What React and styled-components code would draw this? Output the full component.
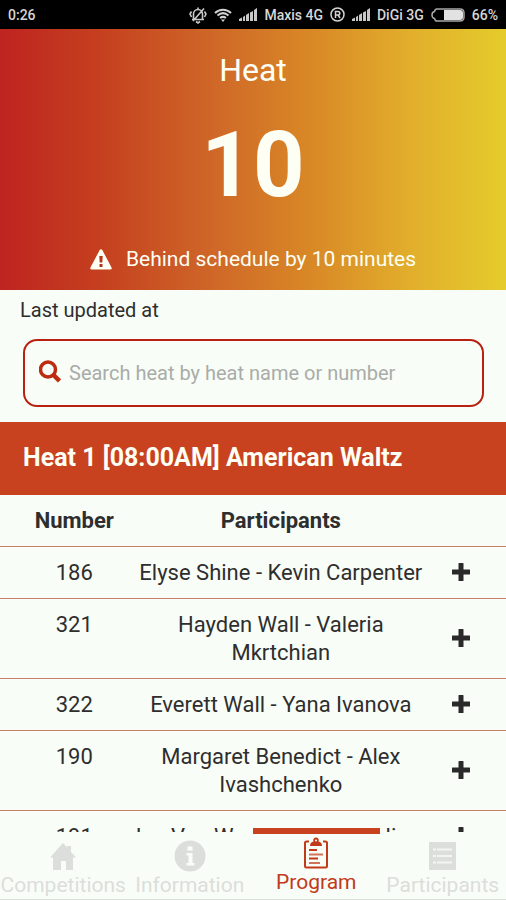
import React from 'react';
import styled, { createGlobalStyle } from 'styled-components';

const GlobalStyle = createGlobalStyle`
  * {
    box-sizing: border-box;
  }
  body {
    margin: 0;
    background: #f9fdf7;
    color: #2e2e2e;
    font-family: Roboto, "Liberation Sans", sans-serif;
    font-size: 22px;
    line-height: 28px;
  }
`

const Screen = styled.div`
  display: flex;
  flex-direction: column;
  height: 100vh;
  overflow: hidden;
`

const StatusBar = styled.div`
  display: flex;
  flex: none;
  align-items: center;
  height: 29px;
  padding: 0 8px;
  background: #000;
  color: #d6d6d6;
  font-size: 14px;
  font-weight: 500;
`

const StatusIcons = styled.div`
  display: flex;
  align-items: center;
  gap: 7px;
  margin-left: auto;
`

const Banner = styled.header`
  display: flex;
  flex: none;
  flex-direction: column;
  align-items: center;
  padding: 21px 16px 17px;
  background: linear-gradient(90deg, #be2420 0%, #c5401f 20%, #cf6728 42%, #d98926 62%, #e2b02c 82%, #e5cc2c 100%);
  color: #fdfff5;
`

const Title = styled.h1`
  margin: 0;
  font-size: 32px;
  line-height: 40px;
  font-weight: 400;
`

const HeatNumber = styled.div`
  margin: 18px 0 21px;
  font-size: 90px;
  line-height: 116px;
  font-weight: 700;
`

const Notice = styled.p`
  display: flex;
  align-items: center;
  gap: 14px;
  margin: 0;
  font-size: 21px;
`

const Updated = styled.p`
  flex: none;
  margin: 0;
  padding: 6px 20px 0;
  font-size: 20px;
`

const SearchBox = styled.label`
  display: flex;
  flex: none;
  align-items: center;
  gap: 8px;
  height: 68px;
  margin: 15px 22px 15px 23px;
  padding: 0 14px;
  border: 2px solid #b8210f;
  border-radius: 14px;
  color: #bd2c10;
`

const SearchInput = styled.input`
  flex: 1;
  min-width: 0;
  padding: 0;
  border: 0;
  outline: 0;
  background: none;
  color: #2e2e2e;
  font: inherit;
  font-size: 20px;
  &::placeholder {
    color: #a9aca8;
    opacity: 1;
  }
`

const HeatTitle = styled.h2`
  flex: none;
  margin: 0;
  padding: 22px 23px 23px;
  background: #c9421f;
  color: #fdfff5;
  font-size: 25px;
  line-height: 28px;
  font-weight: 700;
`

const List = styled.main`
  flex: 1;
  min-height: 0;
  overflow: hidden;
`

const Table = styled.table`
  width: 100%;
  table-layout: fixed;
  border-collapse: separate;
  border-spacing: 0;
  text-align: center;
`

const Cell = styled.td`
  padding: 12px 0 11px;
  border-bottom: 1px solid #c77f69;
`

const NumberCell = styled(Cell)`
  width: 25%;
  padding-left: 22px;
  vertical-align: top;
`

const ActionCell = styled(Cell)`
  width: 14%;
  padding: 0 20px 3px 0;
`

const AddButton = styled.button`
  display: inline-flex;
  padding: 4px;
  border: 0;
  background: none;
  color: #2a2a2a;
  vertical-align: middle;
`

const TabBar = styled.nav`
  display: grid;
  flex: none;
  grid-template-columns: repeat(4, minmax(0, 1fr));
  height: 68px;
  background: #f9fdf7;
  border-bottom: 1px solid #dcdfda;
`

const Tab = styled.a`
  position: relative;
  display: flex;
  flex-direction: column;
  align-items: center;
  justify-content: flex-end;
  padding-bottom: ${props => props.$active ? '3px' : '0'};
  color: ${props => props.$active ? '#c13a1a' : '#dcdedb'};
  font-size: 21px;
  line-height: 27px;
  text-decoration: none;
  white-space: nowrap;
`

const TabIcon = styled.span`
  display: flex;
  align-items: center;
  height: 32px;
`

const Indicator = styled.span`
  position: absolute;
  top: -4px;
  left: 0;
  right: 0;
  height: 6px;
  background: #c9421f;
`

const Signal = () => (
  <svg width="18" height="13" viewBox="0 0 18 13" fill="#c8c8c8">
    <path d="M0 13v-2l3-1.500V13zM4 13V9l2-1.500V13zM7 13V7l3-2v8zM11 13V4.500L14 3v10zM15 13V2l3-2v13z" />
  </svg>
)

const Muted = () => (
  <svg width="18" height="18" viewBox="0 0 18 18" fill="none" stroke="#c8c8c8" strokeWidth="1.6">
    <path d="M4.500 13V8a4.500 4.500 0 0 1 9 0v5M3 13.500h12M7 15.500l2 1.500 2-1.500M9 1.500v2M2.500 5.500L1 8l1.500 3M15.500 5.500L17 8l-1.500 3M4 15L15 2.500" />
  </svg>
)

const Wifi = () => (
  <svg width="18" height="14" viewBox="0 0 18 14" fill="none" stroke="#d2d2d2" strokeWidth="2">
    <path d="M1 5C5.500 0.500 12.500 0.500 17 5M3.500 7.500C7 4.500 11 4.500 14.500 7.500M6 10C8 8.500 10 8.500 12 10" />
    <path d="M7 11.500h4L9 14z" fill="#d2d2d2" stroke="none" />
  </svg>
)

const Registered = () => (
  <svg width="15" height="15" viewBox="0 0 15 15" fill="none" stroke="#d2d2d2" strokeWidth="1.5">
    <circle cx="7.500" cy="7.500" r="6.500" />
    <path d="M5.500 11V4.500h2.500a1.800 1.800 0 0 1 0 3.600H5.500M8 8l2 3" />
  </svg>
)

const Battery = () => (
  <svg width="34" height="14" viewBox="0 0 34 14">
    <path d="M6 1h23q4 0 4 4v4q0 4-4 4H6Q4 13 3.500 10.500Q1 10 1 7t2.500-3.500Q4 1 6 1z" fill="none" stroke="#a8a8a8" strokeWidth="1.500" />
    <path d="M13 2h16q3 0 3 3v4q0 3-3 3H13z" fill="#e2e2e2" />
  </svg>
)

const Warning = () => (
  <svg width="22" height="21" viewBox="0 0 22 21">
    <path d="M9.600 1.200q1.400-2 2.800 0l9 17q1 2.300-1 2.300H1.600q-2 0-1-2.300z" fill="#fdfff5" />
    <path d="M9.300 7h3.400l-.4 6.500H9.700zM9.500 15h3v3h-3z" fill="#b8331d" />
  </svg>
)

const Search = () => (
  <svg width="22" height="26" viewBox="0 0 22 26" fill="none" stroke="currentColor">
    <circle cx="9" cy="9.500" r="7.500" strokeWidth="3.500" />
    <path d="M14.500 15l6 6" strokeWidth="4.500" />
  </svg>
)

const Plus = () => (
  <svg width="18" height="18" viewBox="0 0 18 18" fill="currentColor">
    <path d="M7 0h4q.5 0 .5.500v6h6q.5 0 .5.500v4q0 .5-.5.500h-6v6q0 .5-.5.500H7q-.5 0-.5-.5v-6h-6Q0 11.500 0 11V7q0-.5.500-.5h6v-6Q6.500 0 7 0z" />
  </svg>
)

const House = () => (
  <svg width="26" height="27" viewBox="0 0 26 27" fill="currentColor">
    <path d="M13 0l4 4.500V3h4v6l5 5.500h-3V27h-7v-9h-5v9H3V14.500H0z" />
  </svg>
)

const Info = () => (
  <svg width="32" height="32" viewBox="0 0 32 32">
    <circle cx="16" cy="16" r="15.500" fill="currentColor" />
    <path d="M13.500 6.500h5v4h-5zM12.500 13h6v10h2v2.500h-8V23h2v-7.500h-2z" fill="#f9fdf7" />
  </svg>
)

const Clipboard = () => (
  <svg width="26" height="32" viewBox="0 0 26 32">
    <path d="M6 4.500H3.500Q2 4.500 2 6v23q0 1.500 1.500 1.500h19q1.500 0 1.500-1.500V6q0-1.500-1.500-1.500H20" fill="none" stroke="currentColor" strokeWidth="2" />
    <path d="M7 9q0-4 3.500-4.500a2.800 2.800 0 1 1 5 0Q19 5 19 9z" fill="currentColor" />
    <circle cx="13" cy="3.500" r="1" fill="#f9fdf7" />
    <path d="M6 13h8M6 21.500h9" stroke="currentColor" strokeWidth="2" />
    <path d="M6 17.500h14M6 26h11" stroke="currentColor" strokeWidth="2" opacity="0.7" />
  </svg>
)

const ListIcon = () => (
  <svg width="27" height="28" viewBox="0 0 27 28">
    <rect width="27" height="28" rx="1" fill="currentColor" />
    <path d="M4 7.500h3M8 7.500h15M4 14h3M8 14h15M4 20.500h3M8 20.500h15" stroke="#f2f5f0" strokeWidth="2" />
  </svg>
)

const heats = [
  { number: '186', names: 'Elyse Shine - Kevin Carpenter' },
  { number: '321', names: 'Hayden Wall - Valeria Mkrtchian' },
  { number: '322', names: 'Everett Wall - Yana Ivanova' },
  { number: '190', names: 'Margaret Benedict - Alex Ivashchenko' },
  { number: '191', names: 'Jan Van Wess - Emma Giuliana' },
]

const tabs = [
  { label: 'Competitions', Icon: House },
  { label: 'Information', Icon: Info },
  { label: 'Program', Icon: Clipboard, active: true },
  { label: 'Participants', Icon: ListIcon },
]

const App = () => (
  <Screen>
    <GlobalStyle />
    <StatusBar>
      <span>0:26</span>
      <StatusIcons>
        <Muted />
        <Wifi />
        <Signal />
        <span>Maxis 4G</span>
        <Registered />
        <Signal />
        <span>DiGi 3G</span>
        <Battery />
        <span>66%</span>
      </StatusIcons>
    </StatusBar>
    <Banner>
      <Title>Heat</Title>
      <HeatNumber>10</HeatNumber>
      <Notice><Warning />Behind schedule by 10 minutes</Notice>
    </Banner>
    <Updated>Last updated at</Updated>
    <SearchBox>
      <Search />
      <SearchInput type="text" aria-label="Search heat" placeholder="Search heat by heat name or number" />
    </SearchBox>
    <HeatTitle>Heat 1 [08:00AM] American Waltz</HeatTitle>
    <List>
      <Table>
        <thead>
          <tr>
            <NumberCell as="th" scope="col">Number</NumberCell>
            <Cell as="th" scope="col">Participants</Cell>
            <ActionCell />
          </tr>
        </thead>
        <tbody>
          {heats.map(heat => (
            <tr key={heat.number}>
              <NumberCell>{heat.number}</NumberCell>
              <Cell>{heat.names}</Cell>
              <ActionCell>
                <AddButton type="button" aria-label={`Add ${heat.names}`}><Plus /></AddButton>
              </ActionCell>
            </tr>
          ))}
        </tbody>
      </Table>
    </List>
    <TabBar>
      {tabs.map(({ label, Icon, active }) => (
        <Tab key={label} href="#" $active={active}>
          {active && <Indicator />}
          <TabIcon><Icon /></TabIcon>
          {label}
        </Tab>
      ))}
    </TabBar>
  </Screen>
);

export default App;
